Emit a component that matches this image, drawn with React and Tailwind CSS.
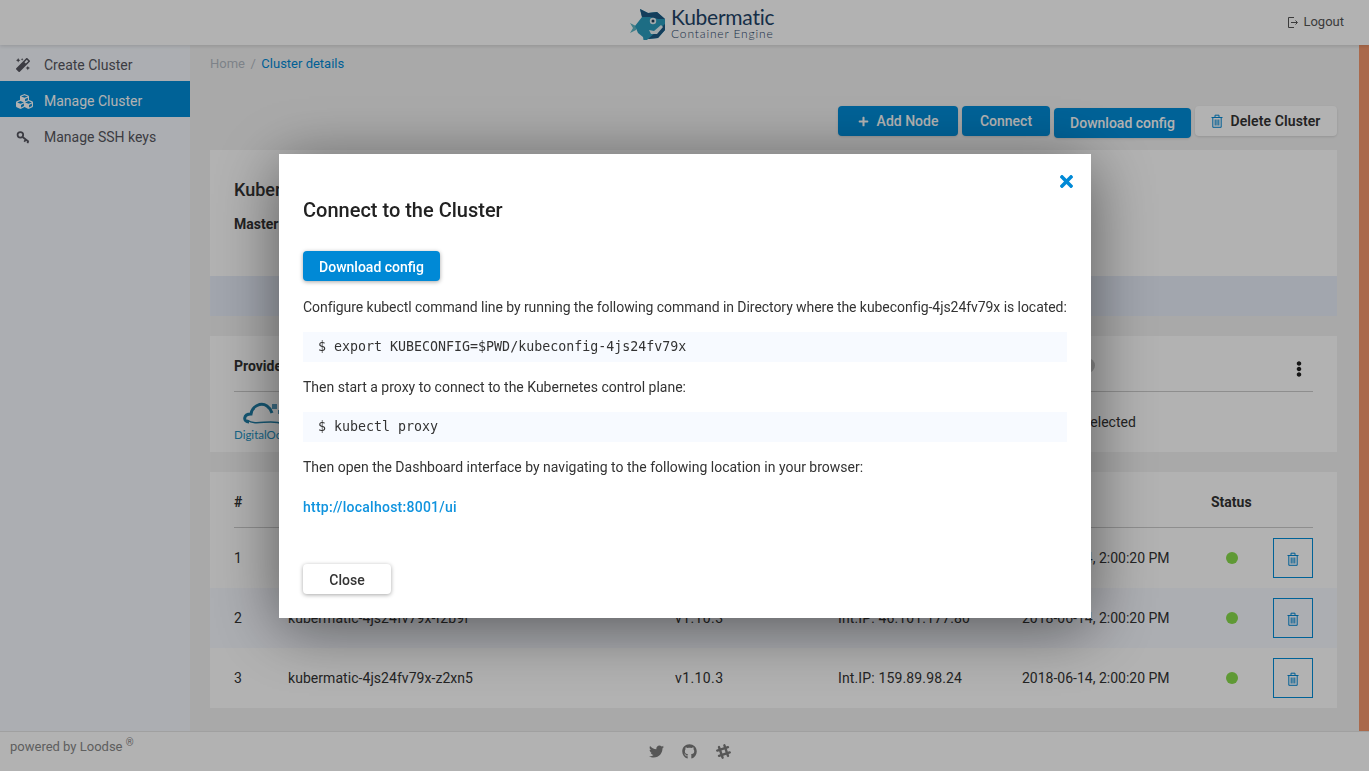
import { FaMagic, FaCubes, FaPlus, FaTimes, FaTwitter, FaGithub, FaSlackHash, FaEllipsisV } from 'react-icons/fa';

const KeyIcon = ({ size = 15 }) => (
  <svg width={size} height={size} viewBox="0 0 16 16" fill="none" stroke="currentColor" strokeWidth="2">
    <circle cx="5" cy="5.5" r="3.2" />
    <path d="M7.5 8L14.5 13.5" />
    <path d="M11 11l-1.5 2.5M14 13l-1 2" />
  </svg>
);

const TrashIcon = ({ className }) => (
  <svg width="12" height="14" viewBox="0 0 12 14" fill="none" stroke="currentColor" strokeWidth="1" className={className}>
    <path d="M.5 3.5h11" />
    <path d="M4 3.5V1.2h4v2.3" />
    <path d="M1.8 3.5v9.8h8.4V3.5" />
    <path d="M4.2 5.5v6M6 5.5v6M7.8 5.5v6" />
  </svg>
);

const NAV = [
  { label: 'Create Cluster', icon: FaMagic },
  { label: 'Manage Cluster', icon: FaCubes, active: true },
  { label: 'Manage SSH keys', icon: KeyIcon },
];

const NODES = [
  { name: 'kubermatic-4js24fv79x-k8d2p', ip: 'Int.IP: 46.101.140.12' },
  { name: 'kubermatic-4js24fv79x-f2b9f', ip: 'Int.IP: 46.101.177.80', tint: true },
  { name: 'kubermatic-4js24fv79x-z2xn5', ip: 'Int.IP: 159.89.98.24' },
];

const SharkLogo = () => (
  <svg width="36" height="34" viewBox="0 0 36 34">
    <path d="M0 17 L6 20 L6 24 L0 27 L3 22 Z" fill="#5fb6c4" />
    <path d="M5 20 L12 11 L10 3 L18 7 L27 6 L35 13 L35 24 L28 32 L18 33 L14 37 L13 31 L8 27 Z" fill="#2a9cbe" />
    <path d="M12 11 L10 3 L18 7 L27 6 L35 13 L28 13 L20 11 Z" fill="#1d5a84" />
    <path d="M28 32 L35 24 L35 18 L26 26 L18 33 Z" fill="#1d5a84" />
    <circle cx="23" cy="15" r="3.2" fill="#e8f2f5" />
    <circle cx="23" cy="15" r="1.5" fill="#1d3f5c" />
    <path d="M19 24 L24 25 L31 19 L33 21 L27 28 L21 28 Z" fill="#e8f2f5" />
  </svg>
);

const LogoutIcon = () => (
  <svg width="10" height="11" viewBox="0 0 10 11" fill="none" stroke="#555" strokeWidth="1">
    <path d="M6 .5H.5v10H6" />
    <path d="M3 5.5h6" />
    <path d="M7.5 3.5l2 2-2 2" />
  </svg>
);

const DigitalOceanLogo = () => (
  <div className="flex flex-col items-start pb-[4px]">
    <svg width="60" height="28" viewBox="0 0 60 28" fill="none" className="ml-[5px]">
      <path d="M10 22 C4 22 4 14 12 14 C13 6 22 2 28 6 C31 8 32 10 33 13" stroke="#1f7fa8" strokeWidth="3" />
      <path d="M8 20 C18 27 30 18 44 24" stroke="#1f7fa8" strokeWidth="1.5" />
      <rect x="33" y="4" width="5" height="5" fill="#5a9fc0" />
      <rect x="39" y="10" width="4" height="4" fill="#5a9fc0" />
      <rect x="44" y="14" width="3" height="3" fill="#7fb6d0" />
    </svg>
    <span className="text-[11.5px] leading-[13px] text-[#2593c4] font-['Lato',sans-serif]">DigitalOcean</span>
  </div>
);

const App = () => {
  return (
    <div className="h-screen overflow-hidden flex flex-col bg-[#f3f3f3] font-['Roboto',sans-serif] text-sm text-[#333]">
      {/* top bar */}
      <header className="h-[45px] shrink-0 bg-white flex items-center pl-[630px] pr-[25px] shadow-[0_1px_4px_rgba(0,0,0,0.15)] z-10">
        <div className="flex items-center gap-[5px]">
          <SharkLogo />
          <div className="flex flex-col text-[#1f4468] font-['Lato',sans-serif] mt-[1px]">
            <span className="text-[21px] leading-[21px] tracking-[-0.25px]">Kubermatic</span>
            <span className="text-[12px] leading-[14px] tracking-[0.85px] font-light">Container Engine</span>
          </div>
        </div>
        <div className="ml-auto flex items-center gap-[5px] text-[#555] text-[13px]">
          <LogoutIcon />
          <span>Logout</span>
        </div>
      </header>

      <div className="flex flex-1 min-h-0">
        {/* sidebar */}
        <aside className="w-[190px] shrink-0 bg-[#f7faff]">
          {NAV.map((item) => (
            <div
              key={item.label}
              className={`h-9 flex items-center pl-4 pt-1 ${item.active ? 'bg-[#008dd9] text-white' : 'text-[#565660]'}`}
            >
              <span className="w-7 flex items-center">
                <item.icon size={item.active ? 17 : 14} />
              </span>
              <span>{item.label}</span>
            </div>
          ))}
        </aside>

        {/* main content */}
        <main className="flex-1 min-w-0 pl-5 pr-[22px]">
          <div className="h-9 pt-[2px] flex items-center gap-[5.5px] text-[13px]">
            <span className="text-[#b4bbc4]">Home</span>
            <span className="text-[#b4bbc4]">/</span>
            <span className="text-[#0089d6]">Cluster details</span>
          </div>

          <div className="flex justify-end gap-1 mt-[25px] mb-3 h-8 font-medium">
            <button className="h-[30px] w-[120px] flex items-center justify-center gap-2 rounded-sm bg-[#008dd9] text-white shadow">
              <FaPlus size={11} /> Add Node
            </button>
            <button className="h-[30px] w-[88px] rounded-sm bg-[#008dd9] text-white shadow">Connect</button>
            <button className="h-[30px] w-[137px] mt-[2px] rounded-sm bg-[#008dd9] text-white shadow">Download config</button>
            <button className="h-[30px] w-[142px] flex items-center justify-center gap-[7px] rounded-sm bg-white text-[#333] font-semibold tracking-[0.1px] shadow">
              <TrashIcon className="text-[#0089d6]" /> Delete Cluster
            </button>
          </div>

          {/* cluster card */}
          <section className="bg-white h-[166px] flex flex-col">
            <div className="flex-1 px-6 pt-[28px]">
              <h2 className="text-lg font-medium leading-6">Kubermatic</h2>
              <div className="font-bold mt-[12px] leading-5">Master</div>
            </div>
            <div className="h-10 bg-[#e8eefa]" />
          </section>

          {/* provider card */}
          <section className="bg-white h-[116px] mt-5 px-6">
            <div className="h-[56px] pt-1 border-b border-[#ccc] flex items-center font-medium">
              <span className="w-[766px] font-bold">Provider</span>
              <span className="font-bold">SSH Keys</span>
              <span className="ml-[19px] w-[15px] h-[15px] rounded-full bg-[#c8c8c8]" />
              <FaEllipsisV size={16} className="ml-auto mr-[6px] mt-[6px] text-[#222]" />
            </div>
            <div className="h-[60px] flex items-center">
              <div className="w-[766px]">
                <DigitalOceanLogo />
              </div>
              <span>No SSH keys selected</span>
            </div>
          </section>

          {/* nodes table */}
          <section className="bg-white h-[236px] mt-5 px-6">
            <div className="h-[56px] pt-1 border-b border-[#ccc] grid grid-cols-[54px_387px_163px_184px_189px_42px_1fr] items-center font-medium">
              <span className="font-bold">#</span>
              <span>Name</span>
              <span>Version</span>
              <span>IP</span>
              <span>Created</span>
              <span className="whitespace-nowrap font-bold">Status</span>
            </div>
            <div className="-mx-6">
              {NODES.map((node, idx) => (
                <div
                  key={node.name}
                  className={`h-[60px] px-6 grid grid-cols-[54px_387px_163px_184px_189px_42px_1fr] items-center ${node.tint ? 'bg-[#f7f9ff]' : ''}`}
                >
                  <span>{idx + 1}</span>
                  <span className="tracking-[0.05px]">{node.name}</span>
                  <span className="tracking-[0.4px]">v1.10.3</span>
                  <span className="tracking-[0.14px]">{node.ip}</span>
                  <span className="whitespace-nowrap">2018-06-14, 2:00:20 PM</span>
                  <span className="w-3 h-3 rounded-full bg-[#88dc4c] justify-self-center" />
                  <button className="w-10 h-10 pt-[2px] justify-self-end border border-[#008dd9] flex items-center justify-center text-[#0089d6]">
                    <TrashIcon />
                  </button>
                </div>
              ))}
            </div>
          </section>
        </main>

        <div className="w-[10px] shrink-0 bg-[#f4976c]" />
      </div>

      {/* footer */}
      <footer className="h-[40px] shrink-0 bg-white border-t border-[#e6e6e6] flex items-center text-[#888]">
        <div className="w-[649px] pl-[10px] pb-[8px] text-[13px]">
          powered by Loodse <sup className="text-[10px] relative -top-[5px]">®</sup>
        </div>
        <div className="flex items-center gap-[18px] text-[#7c7c7c]">
          <FaTwitter size={15} />
          <FaGithub size={15} />
          <FaSlackHash size={17} />
        </div>
      </footer>

      {/* dimmed backdrop + modal */}
      <div className="fixed inset-0 z-20 bg-black/30 flex justify-start items-start pl-[279px] pt-[154px]">
        <div className="relative w-[812px] bg-white px-6 pt-[44px] pb-6 shadow-[0_10px_60px_rgba(0,0,0,0.5)]">
          <button className="absolute top-[18px] right-[15px] text-[#0089d6]">
            <FaTimes size={19} />
          </button>
          <h3 className="text-xl font-medium leading-6 text-[#222]">Connect to the Cluster</h3>
          <button className="mt-[29px] h-[30px] pt-px w-[137px] block rounded-sm bg-[#0089d6] text-white font-medium shadow-[0_1px_4px_rgba(0,0,0,0.35)]">
            Download config
          </button>
          <p className="mt-4 leading-5 whitespace-nowrap tracking-[-0.06px]">Configure kubectl command line by running the following command in Directory where the kubeconfig-4js24fv79x is located:</p>
          <pre className="mt-[15px] h-[30px] pl-[15px] flex items-center bg-[#f7faff] font-['DejaVu_Sans_Mono',monospace] text-[13.3px]">$ export KUBECONFIG=$PWD/kubeconfig-4js24fv79x</pre>
          <p className="mt-[15px] leading-5">Then start a proxy to connect to the Kubernetes control plane:</p>
          <pre className="mt-[15px] h-[30px] pl-[15px] flex items-center bg-[#f7faff] font-['DejaVu_Sans_Mono',monospace] text-[13.3px]">$ kubectl proxy</pre>
          <p className="mt-[15px] leading-5">Then open the Dashboard interface by navigating to the following location in your browser:</p>
          <a className="mt-5 block leading-5 font-medium text-[#0f93de] tracking-[0.25px]">http://localhost:8001/ui</a>
          <button className="mt-[47px] h-[30px] pt-px w-[88px] block rounded-sm bg-white text-[#333] font-medium shadow-[0_1px_4px_rgba(0,0,0,0.35)]">
            Close
          </button>
        </div>
      </div>
    </div>
  );
};

export default App;
